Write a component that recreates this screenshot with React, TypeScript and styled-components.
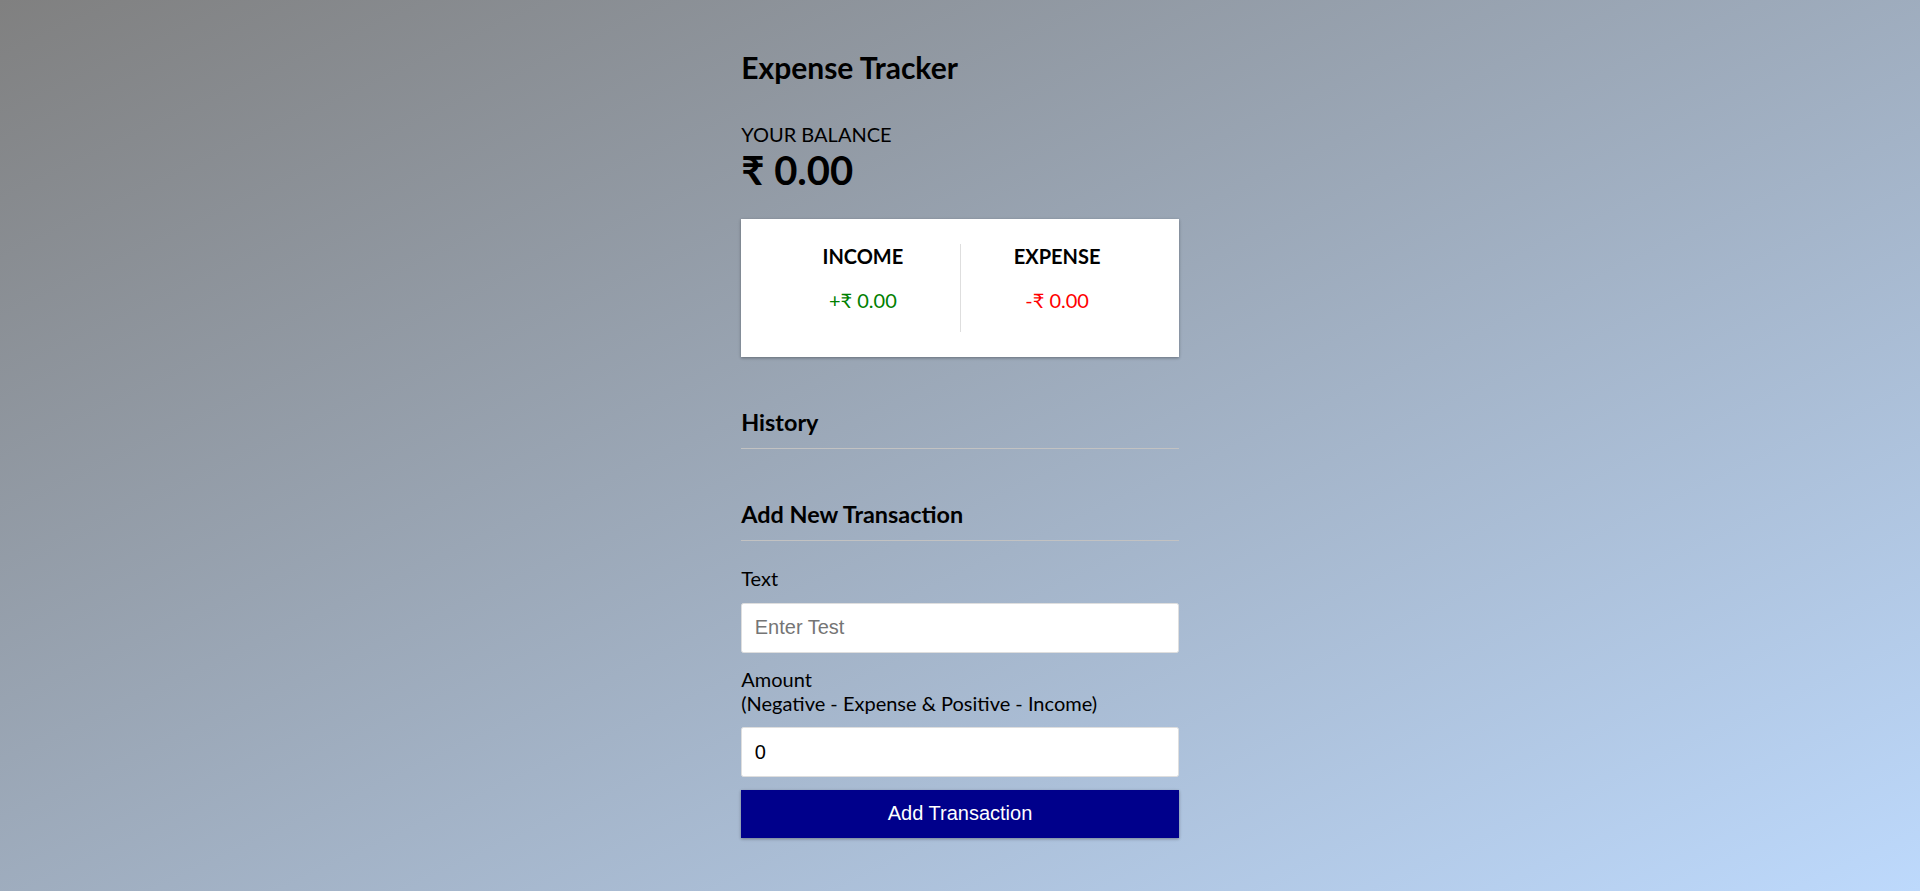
import styled, { createGlobalStyle } from "styled-components"

const GlobalStyle = createGlobalStyle`
    * {
        box-sizing: border-box;
    }

    body {
        margin: 0;
        font-family: 'Lato', 'Noto Sans', 'DejaVu Sans', sans-serif;
    }
`

const Page = styled.div`
    min-height: 100vh;
    background: linear-gradient(to bottom right, #808080, #bdd9fc);
    display: flex;
    justify-content: center;
`

const Container = styled.div`
    width: 437.5px;
    padding-top: 49px;
    color: #000;
`

const Title = styled.h2`
    font-size: 30px;
    line-height: 36px;
    font-weight: 700;
    margin: 0 0 36.5px;
`

const BalanceLabel = styled.h4`
    font-size: 20px;
    line-height: 24px;
    font-weight: 400;
    text-transform: uppercase;
    margin: 0;
`

const Balance = styled.h1`
    font-size: 40px;
    line-height: 48px;
    font-weight: 700;
    margin: 0;
`

const IncExpCard = styled.div`
    background-color: #fff;
    box-shadow: 0 1.25px 3.75px rgba(0, 0, 0, 0.12), 0 1.25px 2.5px rgba(0, 0, 0, 0.24);
    padding: 25px 25px 25.7px;
    display: flex;
    justify-content: space-between;
    margin: 25px 0;
`

const IncExpColumn = styled.div<{ $divider?: boolean }>`
    flex: 1;
    text-align: center;
    border-right: ${p => (p.$divider ? "1px solid #dedede" : "none")};
`

const ColumnTitle = styled.h4`
    font-size: 20px;
    line-height: 24px;
    font-weight: 700;
    text-transform: uppercase;
    margin: 0;
`

const Money = styled.p<{ $color: string }>`
    font-size: 20px;
    line-height: 24px;
    margin: 20px 0;
    color: ${p => p.$color};
`

const SectionTitle = styled.h3`
    font-size: 23.4px;
    line-height: 28px;
    font-weight: 700;
    border-bottom: 1px solid #c2c2c2;
    padding-bottom: 12.5px;
    margin: 50.5px 0 12.5px;
`

const HistoryList = styled.ul`
    list-style: none;
    padding: 0;
    margin: 0;
`

const FormControl = styled.div`
    font-size: 20px;
    line-height: 24px;

    & + & {
        padding-top: 1.5px;
    }
`

const Label = styled.label`
    display: inline-block;
    font-size: 20px;
    line-height: 24px;
    margin: 12.5px 0;
`

const Input = styled.input`
    display: block;
    width: 100%;
    border: 1px solid #dedede;
    border-radius: 2.5px;
    font-family: 'Liberation Sans', Arial, sans-serif;
    font-size: 20px;
    padding: 12.5px;
    color: #000;
    background: #fff;

    &::placeholder {
        color: #757575;
    }
`

const Button = styled.button`
    display: block;
    width: 100%;
    cursor: pointer;
    background-color: #00008b;
    color: #fff;
    border: 0;
    font-family: 'Liberation Sans', Arial, sans-serif;
    font-size: 20px;
    padding: 12.5px;
    margin: 12.5px 0 37.5px;
    box-shadow: 0 1.25px 3.75px rgba(0, 0, 0, 0.12), 0 1.25px 2.5px rgba(0, 0, 0, 0.24);
`

export default function App() {
    return (
        <>
            <GlobalStyle />
            <Page>
                <Container>
                    <Title>Expense Tracker</Title>

                    <BalanceLabel>Your Balance</BalanceLabel>
                    <Balance>₹ 0.00</Balance>

                    <IncExpCard>
                        <IncExpColumn $divider>
                            <ColumnTitle>Income</ColumnTitle>
                            <Money $color="#008000">+₹ 0.00</Money>
                        </IncExpColumn>
                        <IncExpColumn>
                            <ColumnTitle>Expense</ColumnTitle>
                            <Money $color="#ff0000">-₹ 0.00</Money>
                        </IncExpColumn>
                    </IncExpCard>

                    <SectionTitle>History</SectionTitle>
                    <HistoryList />

                    <SectionTitle>Add New Transaction</SectionTitle>
                    <form onSubmit={e => e.preventDefault()}>
                        <FormControl>
                            <Label htmlFor="text">Text</Label>
                            <Input type="text" id="text" placeholder="Enter Test" />
                        </FormControl>
                        <FormControl>
                            <Label htmlFor="amount">
                                Amount <br />
                                (Negative - Expense &amp; Positive - Income)
                            </Label>
                            <Input type="number" id="amount" defaultValue={0} />
                        </FormControl>
                        <Button>Add Transaction</Button>
                    </form>
                </Container>
            </Page>
        </>
    )
}
